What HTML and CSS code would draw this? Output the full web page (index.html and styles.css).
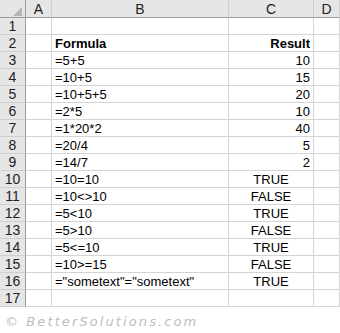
FILE: index.html
```html
<!DOCTYPE html>
<html>
<head>
<meta charset="utf-8">
<link rel="stylesheet" href="styles.css">
</head>
<body>
<div class="sheet">
  <div class="hd corner"><span class="tri"></span></div>
  <div class="hd col">A</div>
  <div class="hd col">B</div>
  <div class="hd col">C</div>
  <div class="hd col">D</div>

  <div class="hd rn">1</div><div class="c"></div><div class="c"></div><div class="c"></div><div class="c"></div>
  <div class="hd rn">2</div><div class="c"></div><div class="c b">Formula</div><div class="c b r">Result</div><div class="c"></div>
  <div class="hd rn">3</div><div class="c"></div><div class="c">=5+5</div><div class="c r">10</div><div class="c"></div>
  <div class="hd rn">4</div><div class="c"></div><div class="c">=10+5</div><div class="c r">15</div><div class="c"></div>
  <div class="hd rn">5</div><div class="c"></div><div class="c">=10+5+5</div><div class="c r">20</div><div class="c"></div>
  <div class="hd rn">6</div><div class="c"></div><div class="c">=2*5</div><div class="c r">10</div><div class="c"></div>
  <div class="hd rn">7</div><div class="c"></div><div class="c">=1*20*2</div><div class="c r">40</div><div class="c"></div>
  <div class="hd rn">8</div><div class="c"></div><div class="c">=20/4</div><div class="c r">5</div><div class="c"></div>
  <div class="hd rn">9</div><div class="c"></div><div class="c">=14/7</div><div class="c r">2</div><div class="c"></div>
  <div class="hd rn">10</div><div class="c"></div><div class="c">=10=10</div><div class="c m">TRUE</div><div class="c"></div>
  <div class="hd rn">11</div><div class="c"></div><div class="c">=10&lt;&gt;10</div><div class="c m">FALSE</div><div class="c"></div>
  <div class="hd rn">12</div><div class="c"></div><div class="c">=5&lt;10</div><div class="c m">TRUE</div><div class="c"></div>
  <div class="hd rn">13</div><div class="c"></div><div class="c">=5&gt;10</div><div class="c m">FALSE</div><div class="c"></div>
  <div class="hd rn">14</div><div class="c"></div><div class="c">=5&lt;=10</div><div class="c m">TRUE</div><div class="c"></div>
  <div class="hd rn">15</div><div class="c"></div><div class="c">=10&gt;=15</div><div class="c m">FALSE</div><div class="c"></div>
  <div class="hd rn">16</div><div class="c"></div><div class="c">="sometext"="sometext"</div><div class="c m">TRUE</div><div class="c"></div>
  <div class="hd rn">17</div><div class="c"></div><div class="c"></div><div class="c"></div><div class="c"></div>
</div>
<div class="mark">© BetterSolutions.com</div>
</body>
</html>
```

FILE: styles.css
```css
html, body {
  margin: 0;
  padding: 0;
  background: #ffffff;
}
body {
  width: 340px;
  height: 333px;
  overflow: hidden;
  font-family: "Liberation Sans", Arial, sans-serif;
  font-size: 13px;
  color: #000;
}
.sheet {
  display: grid;
  grid-template-columns: 26px 26px 177px 85px 26px;
  grid-template-rows: 18px repeat(17, 17px);
}
.sheet > div {
  box-sizing: border-box;
  border-right: 1px solid #d4d4d4;
  border-bottom: 1px solid #d4d4d4;
  display: flex;
  align-items: center;
  white-space: nowrap;
  overflow: visible;
  line-height: 1;
}
.hd {
  background: #e6e6e6;
  color: #222;
  justify-content: center;
  font-size: 14px;
}
.col {
  border-bottom: 1px solid #9b9b9b !important;
  border-right: 1px solid #cfcfcf !important;
}
.rn {
  border-right: 1px solid #9b9b9b !important;
  border-bottom: 1px solid #cfcfcf !important;
}
.corner {
  position: relative;
  border-bottom: 1px solid #9b9b9b !important;
  border-right: 1px solid #9b9b9b !important;
}
.tri {
  position: absolute;
  right: 3px;
  bottom: 1px;
  width: 0;
  height: 0;
  border-left: 9px solid transparent;
  border-bottom: 9px solid #b5b5b5;
}
.c {
  padding: 0 3px;
}
.b {
  font-weight: bold;
}
.r {
  justify-content: flex-end;
}
.m {
  justify-content: center;
}
.mark {
  margin: 7px 0 0 5px;
  font-family: "DejaVu Sans", sans-serif;
  font-style: italic;
  font-size: 13px;
  letter-spacing: 2.1px;
  color: #bdbdbd;
}
```
